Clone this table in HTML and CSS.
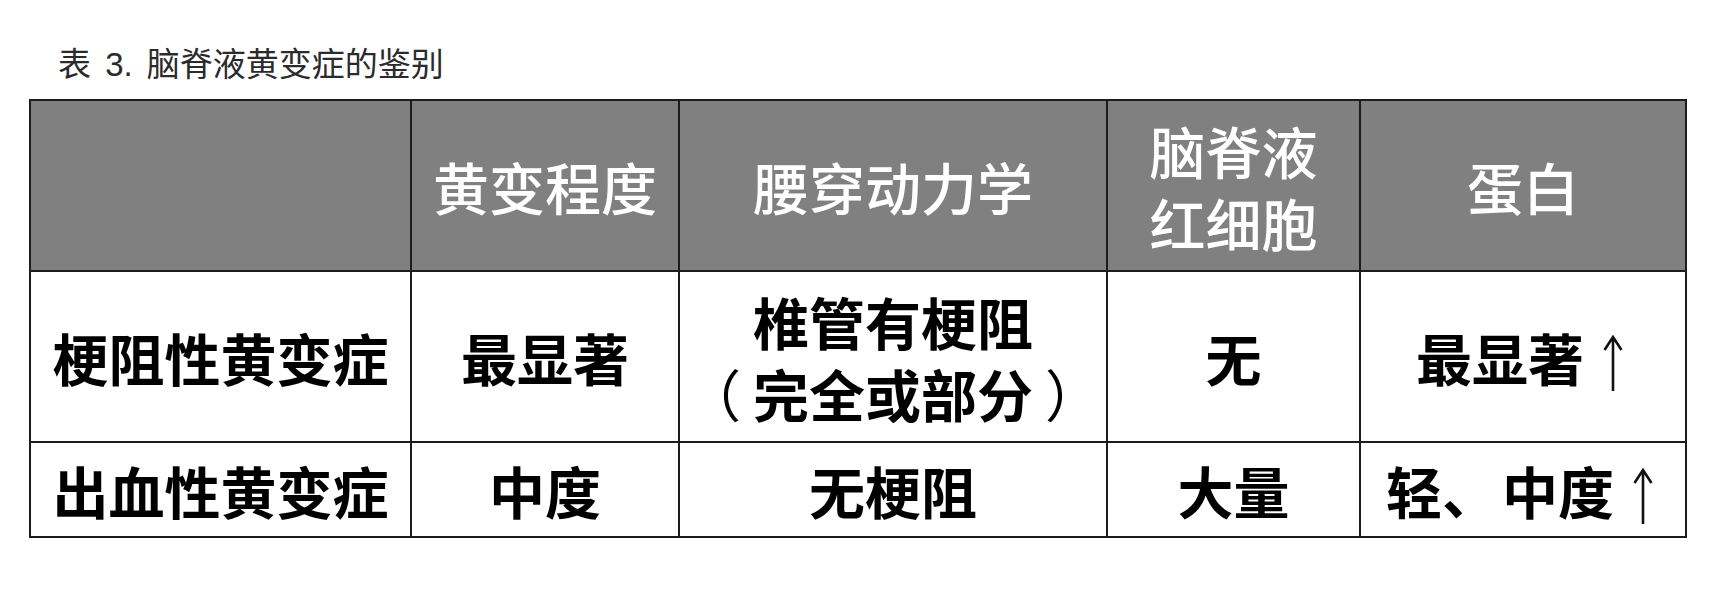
FILE: index.html
```html
<!DOCTYPE html>
<html lang="zh-CN">
<head>
<meta charset="utf-8">
<title>表 3. 脑脊液黄变症的鉴别</title>
<link rel="stylesheet" href="styles.css">
</head>
<body>
<div class="page">
  <div class="caption">表 3. 脑脊液黄变症的鉴别</div>
  <table class="grid">
    <colgroup>
      <col class="c1"><col class="c2"><col class="c3"><col class="c4"><col class="c5">
    </colgroup>
    <thead>
      <tr class="head">
        <th></th>
        <th>黄变程度</th>
        <th>腰穿动力学</th>
        <th>脑脊液<br>红细胞</th>
        <th>蛋白</th>
      </tr>
    </thead>
    <tbody>
      <tr class="r1">
        <td>梗阻性黄变症</td>
        <td>最显著</td>
        <td>椎管有梗阻<br><span class="paren open">（</span>完全或部分<span class="paren close">）</span></td>
        <td>无</td>
        <td>最显著<svg class="arrow" viewBox="0 0 22 56" width="22" height="56" aria-label="↑"><path d="M11 2 V56 M2.5 15 L11 2 L19.5 15" fill="none" stroke="#111" stroke-width="2.6"/></svg></td>
      </tr>
      <tr class="r2">
        <td>出血性黄变症</td>
        <td>中度</td>
        <td>无梗阻</td>
        <td>大量</td>
        <td>轻<span class="comma">、</span>中度<svg class="arrow" viewBox="0 0 22 56" width="22" height="56" aria-label="↑"><path d="M11 2 V56 M2.5 15 L11 2 L19.5 15" fill="none" stroke="#111" stroke-width="2.6"/></svg></td>
      </tr>
    </tbody>
  </table>
</div>
</body>
</html>
```
FILE: styles.css
```css
html, body {
  margin: 0;
  padding: 0;
  background: #ffffff;
}
.page {
  padding: 0 0 0 29px;
}
.caption {
  font-family: "Liberation Sans", "Noto Sans CJK SC", sans-serif;
  font-size: 33px;
  line-height: 40px;
  color: #2b2b2b;
  word-spacing: 5px;
  padding: 45px 0 0 29px;
  height: 54px;
}
.grid {
  border-collapse: collapse;
  table-layout: fixed;
  width: 1656px;
  font-family: "Noto Sans CJK SC", sans-serif;
  font-size: 56px;
  line-height: 72px;
}
.c1 { width: 381px; }
.c2 { width: 268px; }
.c3 { width: 428px; }
.c4 { width: 253px; }
.c5 { width: 326px; }
.grid th, .grid td {
  border: 2px solid #1c1c1c;
  text-align: center;
  vertical-align: middle;
  padding: 0;
}
.head th {
  background: #808080;
  color: #ffffff;
  font-weight: 500;
  height: 169px;
}
.grid td {
  color: #000000;
  font-weight: 700;
}
.r1 td { height: 169px; }
.r2 td { height: 93px; }
.paren {
  font-weight: 400;
}
.paren.open { margin-right: 12px; }
.paren.close { margin-left: 12px; }
.comma { margin-right: 4px; }
.arrow {
  display: inline-block;
  vertical-align: -10px;
  margin-left: 18px;
  margin-right: 6px;
}
```
